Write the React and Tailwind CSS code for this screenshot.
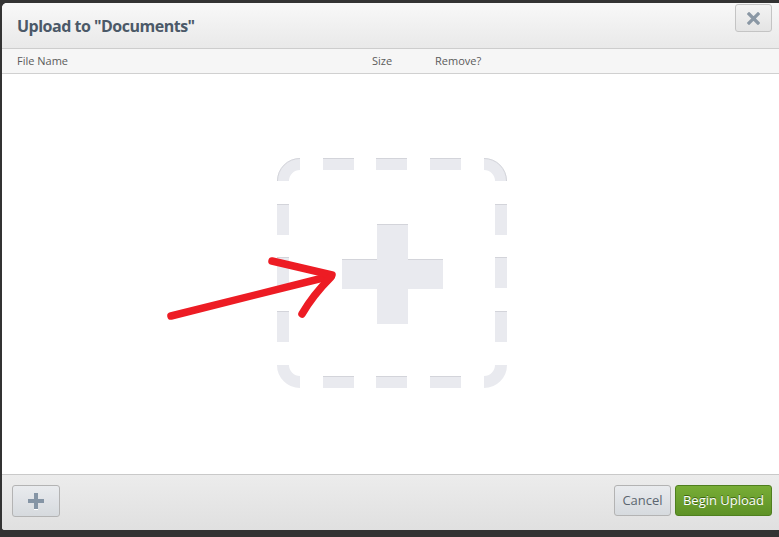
import { useState } from "react";

const columns = [
  { label: "File Name", className: "w-[355px]" },
  { label: "Size", className: "w-[63px]" },
  { label: "Remove?", className: "" },
];

function DropZone() {
  const fill = "#e9eaef";
  const edge = "#d3d4da";
  const starts = [46, 99, 153];
  return (
    <svg width="230" height="230" viewBox="0 0 230 230">
      {/* corners */}
      <g fill="none" stroke={fill} strokeWidth="12">
        <path d="M6 23 A17 17 0 0 1 23 6" />
        <path d="M207 6 A17 17 0 0 1 224 23" />
        <path d="M224 207 A17 17 0 0 1 207 224" />
        <path d="M23 224 A17 17 0 0 1 6 207" />
      </g>
      <g fill="none" stroke={edge} strokeWidth="1">
        <path d="M0.5 23 A22.5 22.5 0 0 1 23 0.5" />
        <path d="M207 0.5 A22.5 22.5 0 0 1 229.5 23" />
      </g>
      {starts.map((s) => (
        <g key={s}>
          <rect x={s} y="0" width="31" height="12" fill={fill} />
          <rect x={s} y="0" width="31" height="1" fill={edge} />
          <rect x={s} y="218" width="31" height="12" fill={fill} />
          <rect x={s} y="218" width="31" height="1" fill={edge} />
          <rect x="0" y={s} width="12" height="31" fill={fill} />
          <rect x="0" y={s} width="12" height="1" fill={edge} />
          <rect x="218" y={s} width="12" height="31" fill={fill} />
          <rect x="218" y={s} width="12" height="1" fill={edge} />
        </g>
      ))}
      {/* plus */}
      <rect x="100" y="66" width="31" height="100" fill={fill} />
      <rect x="65" y="101" width="101" height="30" fill={fill} />
      <rect x="100" y="66" width="31" height="1" fill={edge} />
      <rect x="65" y="101" width="35" height="1" fill={edge} />
      <rect x="131" y="101" width="35" height="1" fill={edge} />
    </svg>
  );
}

export default function App() {
  const [files] = useState([]);

  return (
    <div
      className="w-[779px] h-[537px] overflow-hidden bg-[#333333] pt-[3px] pl-[2px]"
      style={{ fontFamily: '"Open Sans", "Liberation Sans", sans-serif' }}
    >
      <div className="w-[777px] h-[527px] bg-white rounded-tl-[5px] rounded-bl-[3px] flex flex-col overflow-hidden">
        {/* header */}
        <div className="h-[46px] flex justify-between items-start bg-gradient-to-b from-[#f8f8f8] to-[#e9e9e9] border-b border-[#cdcdcd] shrink-0">
          <h1 className="pl-[15px] pt-[12px] text-[16px] leading-[22px] font-bold tracking-[-0.5px] text-[#4b5968]">
            Upload to "Documents"
          </h1>
          <button className="mr-[7px] mt-[1px] w-[37px] h-[28px] rounded-[3px] border border-[#c4c4c4] bg-gradient-to-b from-[#f3f3f3] to-[#e4e4e4] flex items-center justify-center">
            <svg width="13" height="13" viewBox="0 0 13 13">
              <path d="M2 2 L11 11 M11 2 L2 11" stroke="#8a97a4" strokeWidth="3.2" strokeLinecap="square" />
            </svg>
          </button>
        </div>

        {/* column heads */}
        <div className="h-[25px] flex items-center pl-[15px] bg-[#f6f6f6] border-b border-[#d0d0d0] text-[11px] text-[#5b5b5b] shrink-0">
          {columns.map((c) => (
            <div key={c.label} className={c.className}>
              {c.label}
            </div>
          ))}
        </div>

        {/* body */}
        <div className="relative flex-1 flex items-center justify-center pl-[3px] pb-[2px]">
          {files.length === 0 && <DropZone />}
          <svg className="absolute left-0 top-0" width="777" height="400" viewBox="0 0 777 400">
            <g fill="none" stroke="#ed1c24" strokeWidth="7.5" strokeLinecap="round" strokeLinejoin="round">
              <path d="M169 242 L329 202" />
              <path d="M270 187 L330 201" />
              <path d="M329 203 C318 214 307 228 300 240" />
            </g>
          </svg>
        </div>

        {/* footer */}
        <div className="h-[56px] shrink-0 border-t border-[#c9c9c9] bg-gradient-to-b from-[#ececec] to-[#e0e0e0] flex justify-between items-start pt-[10px] pl-[10px] pr-[7px]">
          <button className="w-[48px] h-[32px] rounded-[3px] border border-[#b3b3b3] bg-gradient-to-b from-[#e9ebee] to-[#d6dade] flex items-center justify-center">
            <svg width="16" height="17" viewBox="0 0 16 17">
              <path d="M6 0 H10 V6 H16 V10 H10 V16 H6 V10 H0 V6 H6 Z" fill="#8595a5" />
              <path d="M6 16 H10 V17 H6 Z" fill="#ffffff" />
            </svg>
          </button>
          <div className="flex gap-[4px]">
            <button className="w-[57px] h-[31px] rounded-[3px] border border-[#b3b3b3] bg-gradient-to-b from-[#e9ebee] to-[#d6dade] text-[13px] text-[#5c6670]">
              Cancel
            </button>
            <button className="w-[97px] h-[31px] rounded-[3px] border border-[#4f7f1e] bg-gradient-to-b from-[#78ad36] to-[#5e9226] text-[13px] text-white [text-shadow:0_-1px_0_#3d6512]">
              Begin Upload
            </button>
          </div>
        </div>
      </div>
    </div>
  );
}
